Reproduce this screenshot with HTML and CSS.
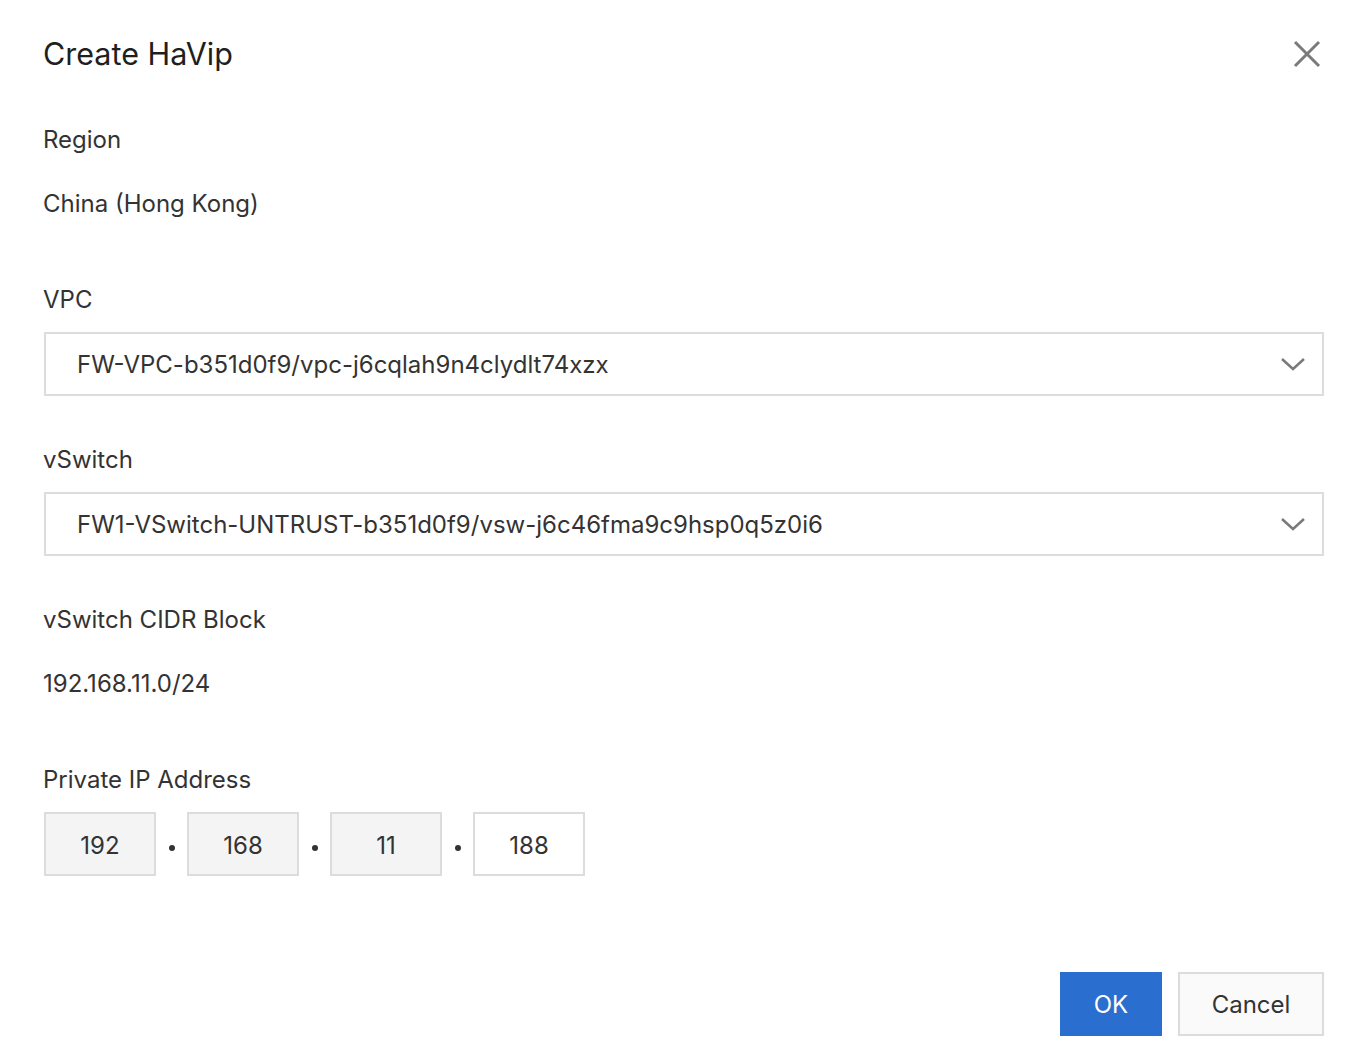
FILE: index.html
```html
<!DOCTYPE html>
<html>
<head>
<meta charset="utf-8">
<title>Create HaVip</title>
<link rel="stylesheet" href="styles.css">
</head>
<body>
<div class="dialog">
  <div class="header">
    <div class="title">Create HaVip</div>
    <svg class="close" width="30" height="30" viewBox="0 0 30 30">
      <path d="M3 3 L27 27 M27 3 L3 27" stroke="#7a7a7a" stroke-width="3" fill="none"/>
    </svg>
  </div>
  <div class="body">
    <div class="item">
      <div class="label">Region</div>
      <div class="value">China (Hong Kong)</div>
    </div>
    <div class="item">
      <div class="label">VPC</div>
      <div class="select">
        <span class="select-text">FW-VPC-b351d0f9/vpc-j6cqlah9n4clydlt74xzx</span>
        <svg class="chev" width="26" height="16" viewBox="0 0 26 16"><path d="M2 3 L13 13 L24 3" stroke="#7a7a7a" stroke-width="2.5" fill="none"/></svg>
      </div>
    </div>
    <div class="item">
      <div class="label">vSwitch</div>
      <div class="select">
        <span class="select-text">FW1-VSwitch-UNTRUST-b351d0f9/vsw-j6c46fma9c9hsp0q5z0i6</span>
        <svg class="chev" width="26" height="16" viewBox="0 0 26 16"><path d="M2 3 L13 13 L24 3" stroke="#7a7a7a" stroke-width="2.5" fill="none"/></svg>
      </div>
    </div>
    <div class="item">
      <div class="label">vSwitch CIDR Block</div>
      <div class="value">192.168.11.0/24</div>
    </div>
    <div class="item">
      <div class="label">Private IP Address</div>
      <div class="ip">
        <div class="seg disabled">192</div>
        <span class="dot"></span>
        <div class="seg disabled">168</div>
        <span class="dot"></span>
        <div class="seg disabled">11</div>
        <span class="dot"></span>
        <div class="seg">188</div>
      </div>
    </div>
  </div>
  <div class="footer">
    <button class="btn primary">OK</button>
    <button class="btn">Cancel</button>
  </div>
</div>
</body>
</html>
```
FILE: styles.css
```css
html, body {
  margin: 0;
  padding: 0;
  background: #fff;
}
body {
  font-family: Inter, "Noto Sans", "Liberation Sans", sans-serif;
  color: #333;
}
.dialog {
  width: 1368px;
  height: 1062px;
  box-sizing: border-box;
  padding: 34px 44px 0 43px;
  display: flex;
  flex-direction: column;
}
.header {
  display: flex;
  justify-content: space-between;
  align-items: center;
  height: 40px;
}
.title {
  font-size: 30.5px;
  line-height: 40px;
  color: #1f1f1f;
}
.close {
  margin-right: 2px;
  width: 30px;
  height: 30px;
}
.body {
  margin-top: 50px;
  display: flex;
  flex-direction: column;
}
.item {
  display: flex;
  flex-direction: column;
}
.item + .item {
  margin-top: 48px;
}
.item:has(.value) + .item {
  margin-top: 64px;
}
.label {
  font-size: 24px;
  line-height: 32px;
  color: #333;
}
.value {
  margin-top: 32px;
  font-size: 24px;
  line-height: 32px;
  color: #333;
}
.select {
  margin-top: 16px;
  margin-left: 1px;
  height: 64px;
  box-sizing: border-box;
  border: 2px solid #dcdcdc;
  display: flex;
  align-items: center;
  justify-content: space-between;
  padding: 0 16px 0 31px;
}
.select-text {
  font-size: 24px;
  color: #333;
}
.chev {
  display: block;
}
.ip {
  margin-top: 16px;
  margin-left: 1px;
  display: flex;
  align-items: center;
}
.seg {
  width: 112px;
  height: 64px;
  box-sizing: border-box;
  border: 2px solid #dcdcdc;
  background: #fff;
  display: flex;
  align-items: center;
  justify-content: center;
  padding-top: 3px;
  font-size: 24px;
  color: #333;
}
.seg.disabled {
  background: #f3f4f3;
}
.dot {
  width: 31px;
  display: flex;
  justify-content: center;
  align-self: center;
  padding-top: 8px;
}
.dot::before {
  content: "";
  width: 6px;
  height: 6px;
  border-radius: 50%;
  background: #333;
}
.footer {
  margin-top: auto;
  margin-bottom: 26px;
  display: flex;
  justify-content: flex-end;
  gap: 16px;
}
.btn {
  height: 64px;
  box-sizing: border-box;
  font-family: inherit;
  font-size: 24px;
  border: 2px solid #dcdcdc;
  background: #fafafa;
  color: #333;
  padding: 0;
  margin: 0;
}
.btn.primary {
  width: 102px;
  background: #2a6fd0;
  border-color: #2a6fd0;
  color: #fff;
}
.btn:not(.primary) {
  width: 146px;
}
```
